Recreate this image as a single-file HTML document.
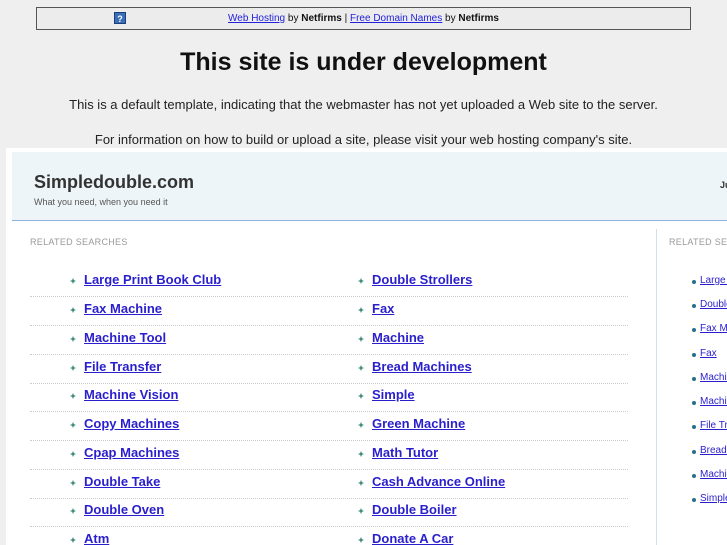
<!DOCTYPE html>
<html><head><style>
*{margin:0;padding:0;box-sizing:border-box}
html,body{width:727px;height:545px;overflow:hidden}
body{background:#efefef;font-family:"Liberation Sans",sans-serif;position:relative}
.bar{position:absolute;left:36px;top:7px;width:655px;height:23px;border:1px solid #555;background:#ececec;font-size:10px;text-align:center;line-height:21px;color:#111}
.bar a{color:#2222dd;text-decoration:underline}
.q{position:absolute;left:77px;top:4px;width:12px;height:12px;background:#3a6fb8;color:#fff;font-size:9px;line-height:12px;font-weight:bold;border:1px solid #1a3f7a}
h1{position:absolute;top:48px;width:727px;text-align:center;font-size:25px;font-weight:bold;color:#111}
.p{position:absolute;width:727px;text-align:center;font-size:13px;color:#222}
.frame{position:absolute;left:6px;top:148px;width:721px;height:397px;background:#fff;overflow:hidden}
.hdr{position:absolute;left:6px;top:4px;width:715px;height:69px;background:#eef5f8;border-bottom:1px solid #8fb1e0}
.t{position:absolute;left:22px;top:20px;font-size:18px;font-weight:bold;color:#333}
.s{position:absolute;left:22px;top:45px;font-size:9px;color:#555}
.rs{position:absolute;font-size:9px;color:#999;letter-spacing:.3px;white-space:nowrap}
.vl{position:absolute;left:650px;top:81px;width:1px;height:320px;background:#cfdff0}
.row{position:absolute;left:24px;width:598px;height:29px;border-bottom:1px dotted #ccc}
.it{position:absolute;font-size:13px;font-weight:bold;color:#2a1fcc;text-decoration:underline;top:4px;white-space:nowrap}
.it:before{content:"";position:absolute;left:-14px;top:6px;width:6px;height:6px;background:#3b8b7a;clip-path:polygon(50% 0,65% 35%,100% 50%,65% 65%,50% 100%,35% 65%,0 50%,35% 35%)}
.r{position:absolute;left:694px;font-size:10px;color:#2a1fcc;text-decoration:underline;white-space:nowrap}
.r:before{content:"";position:absolute;left:-8px;top:5px;width:4px;height:4px;border-radius:2px;background:#2a6f8a}
</style></head><body>
<div class="bar"><span class="q">?</span><a>Web Hosting</a> by <b>Netfirms</b> | <a>Free Domain Names</a> by <b>Netfirms</b></div>
<h1>This site is under development</h1>
<div class="p" style="top:97px">This is a default template, indicating that the webmaster has not yet uploaded a Web site to the server.</div>
<div class="p" style="top:132px">For information on how to build or upload a site, please visit your web hosting company's site.</div>
<div class="frame">
<div class="hdr"><div class="t">Simpledouble.com</div><div class="s">What you need, when you need it</div><div style="position:absolute;left:708px;top:28px;font-size:9px;font-weight:bold;color:#333">Ju</div></div>
<div class="rs" style="left:24px;top:89px">RELATED SEARCHES</div>
<div class="rs" style="left:663px;top:89px">RELATED SEARCHES</div>
<div class="vl"></div>
</div>
<div style="position:absolute;left:0;top:0;width:727px;height:545px;overflow:hidden">
<div class="row" style="left:30px;top:268px"><span class="it" style="left:54px">Large Print Book Club</span><span class="it" style="left:342px">Double Strollers</span></div>
<div class="row" style="left:30px;top:297px"><span class="it" style="left:54px">Fax Machine</span><span class="it" style="left:342px">Fax</span></div>
<div class="row" style="left:30px;top:326px"><span class="it" style="left:54px">Machine Tool</span><span class="it" style="left:342px">Machine</span></div>
<div class="row" style="left:30px;top:355px"><span class="it" style="left:54px">File Transfer</span><span class="it" style="left:342px">Bread Machines</span></div>
<div class="row" style="left:30px;top:383px"><span class="it" style="left:54px">Machine Vision</span><span class="it" style="left:342px">Simple</span></div>
<div class="row" style="left:30px;top:412px"><span class="it" style="left:54px">Copy Machines</span><span class="it" style="left:342px">Green Machine</span></div>
<div class="row" style="left:30px;top:441px"><span class="it" style="left:54px">Cpap Machines</span><span class="it" style="left:342px">Math Tutor</span></div>
<div class="row" style="left:30px;top:470px"><span class="it" style="left:54px">Double Take</span><span class="it" style="left:342px">Cash Advance Online</span></div>
<div class="row" style="left:30px;top:498px"><span class="it" style="left:54px">Double Oven</span><span class="it" style="left:342px">Double Boiler</span></div>
<div class="row" style="left:30px;top:527px;border:0"><span class="it" style="left:54px">Atm</span><span class="it" style="left:342px">Donate A Car</span></div>
<div class="r" style="left:700px;top:275px">Large Print</div>
<div class="r" style="left:700px;top:299px">Double Str</div>
<div class="r" style="left:700px;top:323px">Fax Machine</div>
<div class="r" style="left:700px;top:348px">Fax</div>
<div class="r" style="left:700px;top:372px">Machine</div>
<div class="r" style="left:700px;top:396px">Machine Tool</div>
<div class="r" style="left:700px;top:420px">File Transfer</div>
<div class="r" style="left:700px;top:445px">Bread Machines</div>
<div class="r" style="left:700px;top:469px">Machine Vision</div>
<div class="r" style="left:700px;top:493px">Simple</div>
</div>
</body></html>
